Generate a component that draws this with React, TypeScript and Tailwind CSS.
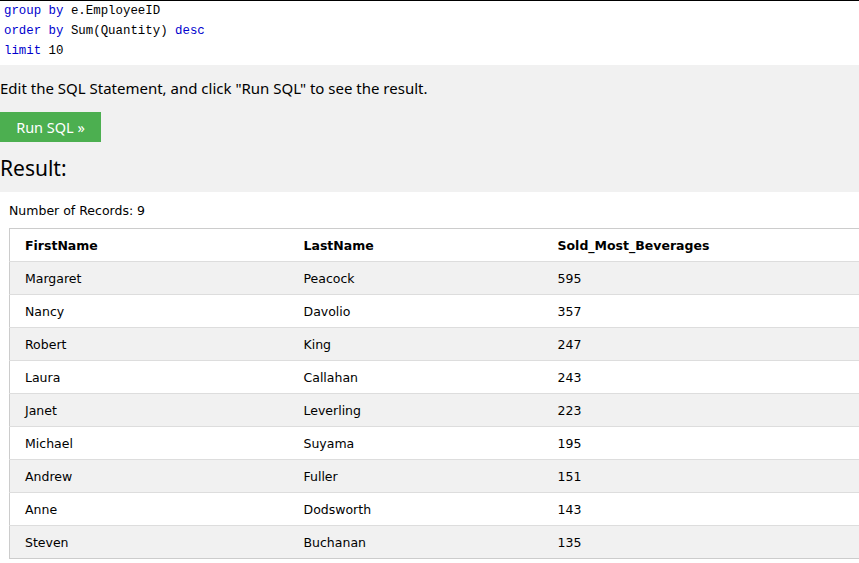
import React from 'react'

const rows = [
  ['Margaret', 'Peacock', '595'],
  ['Nancy', 'Davolio', '357'],
  ['Robert', 'King', '247'],
  ['Laura', 'Callahan', '243'],
  ['Janet', 'Leverling', '223'],
  ['Michael', 'Suyama', '195'],
  ['Andrew', 'Fuller', '151'],
  ['Anne', 'Dodsworth', '143'],
  ['Steven', 'Buchanan', '135'],
]

const kw = 'text-[#0000cd]'

export default function App() {
  return (
    <div className="w-full h-[563px] overflow-hidden bg-white text-black">
      {/* editor tail */}
      <div className="border-t border-black pl-[4px] pb-[4px] font-['Liberation_Mono',monospace] text-[12.4px] leading-5">
        <div><span className={kw}>group by</span> e.EmployeeID</div>
        <div><span className={kw}>order by</span> Sum(Quantity) <span className={kw}>desc</span></div>
        <div><span className={kw}>limit</span> 10</div>
      </div>

      <div className="bg-[#f1f1f1] pt-[13px] pb-[9px] font-['Noto_Sans',sans-serif]">
        <p className="h-5 leading-5 text-[15px]">Edit the SQL Statement, and click "Run SQL" to see the result.</p>
        <button className="mt-[14px] h-[30px] w-[101px] bg-[#4caf50] text-white text-[14.5px] leading-[30px] text-center">
          Run SQL »
        </button>
        <h2 className="mt-[11px] h-[30px] leading-[30px] text-[21px]">Result:</h2>
      </div>

      <div className="pt-[10px] font-['DejaVu_Sans',sans-serif] text-[12.5px]">
        <div className="pl-[9px] h-[18px] leading-[18px]">Number of Records: 9</div>
        <table className="mt-[8px] ml-[9px] w-[900px] border-collapse border border-[#ccc] table-fixed">
          <thead>
            <tr className="h-[33px] bg-white font-bold">
              <th className="w-[286px] pl-[15px] pt-[2px] text-left">FirstName</th>
              <th className="w-[254px] pl-2 pt-[2px] text-left">LastName</th>
              <th className="pl-2 pt-[2px] text-left">Sold_Most_Beverages</th>
            </tr>
          </thead>
          <tbody>
            {rows.map((r, i) => (
              <tr key={r[0]} className={`h-[33px] border-t border-[#ddd] ${i % 2 === 0 ? 'bg-[#f1f1f1]' : 'bg-white'}`}>
                <td className="pl-[15px] pt-[2px]">{r[0]}</td>
                <td className="pl-2 pt-[2px]">{r[1]}</td>
                <td className="pl-2 pt-[2px]">{r[2]}</td>
              </tr>
            ))}
          </tbody>
        </table>
      </div>
    </div>
  )
}
